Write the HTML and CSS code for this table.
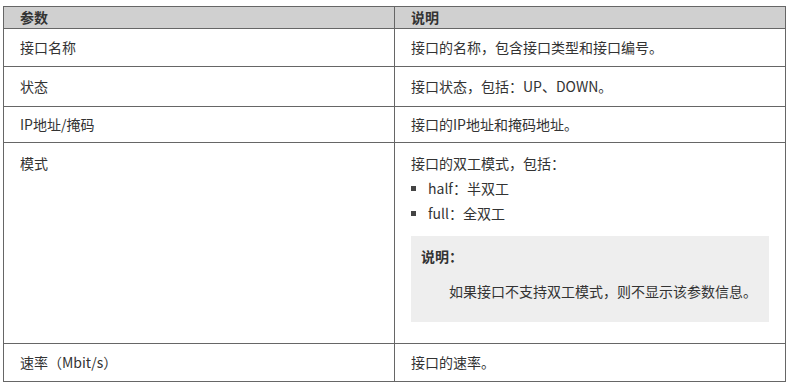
FILE: index.html
```html
<!DOCTYPE html>
<html lang="zh-CN">
<head>
<meta charset="utf-8">
<link rel="stylesheet" href="styles.css">
</head>
<body>
<table class="params">
  <thead>
    <tr><th>参数</th><th>说明</th></tr>
  </thead>
  <tbody>
    <tr class="r1"><td>接口名称</td><td>接口的名称，包含接口类型和接口编号。</td></tr>
    <tr class="r2"><td>状态</td><td>接口状态，包括：UP、DOWN。</td></tr>
    <tr class="r3"><td>IP地址/掩码</td><td>接口的IP地址和掩码地址。</td></tr>
    <tr class="mode">
      <td>模式</td>
      <td>
        <p class="lead">接口的双工模式，包括：</p>
        <ul class="opts">
          <li>half：半双工</li>
          <li>full：全双工</li>
        </ul>
        <div class="note">
          <p class="note-title">说明：</p>
          <p class="note-body">如果接口不支持双工模式，则不显示该参数信息。</p>
        </div>
      </td>
    </tr>
    <tr class="r5"><td>速率（Mbit/s）</td><td>接口的速率。</td></tr>
  </tbody>
</table>
</body>
</html>
```
FILE: styles.css
```css
html, body {
  margin: 0;
  padding: 0;
  background: #ffffff;
}
body {
  padding: 6px 4px 0 3px;
  font-family: "Microsoft YaHei", "Noto Sans CJK SC", sans-serif;
  font-size: 14px;
  color: #333333;
}
.params {
  width: 783px;
  border-collapse: collapse;
  table-layout: fixed;
}
.params th,
.params td {
  border: 1px solid #666666;
  text-align: left;
  vertical-align: top;
  padding: 8px 16px;
  line-height: 21px;
  width: 50%;
}
.params th {
  background: #d0d0d0;
  font-weight: bold;
  padding: 0 16px;
  line-height: 21px;
}
.r2 td { padding-top: 9px; padding-bottom: 9px; }
.r3 td { padding-top: 7px; padding-bottom: 7px; }
.mode td { padding-top: 10px; padding-bottom: 21px; }
.lead {
  margin: 0;
}
.opts {
  list-style: none;
  margin: 4px 0 0;
  padding: 0;
}
.opts li {
  position: relative;
  padding-left: 17px;
  line-height: 21px;
  margin-bottom: 4px;
}
.opts li::before {
  content: "";
  position: absolute;
  left: 0;
  top: 8px;
  width: 5px;
  height: 5px;
  background: #444444;
}
.note {
  margin-top: 12px;
  background: #eeeeee;
  padding: 10px 10px 20px;
}
.note-title {
  margin: 0;
  font-weight: bold;
}
.note-body {
  margin: 14px 0 0;
  text-indent: 2em;
}
```
